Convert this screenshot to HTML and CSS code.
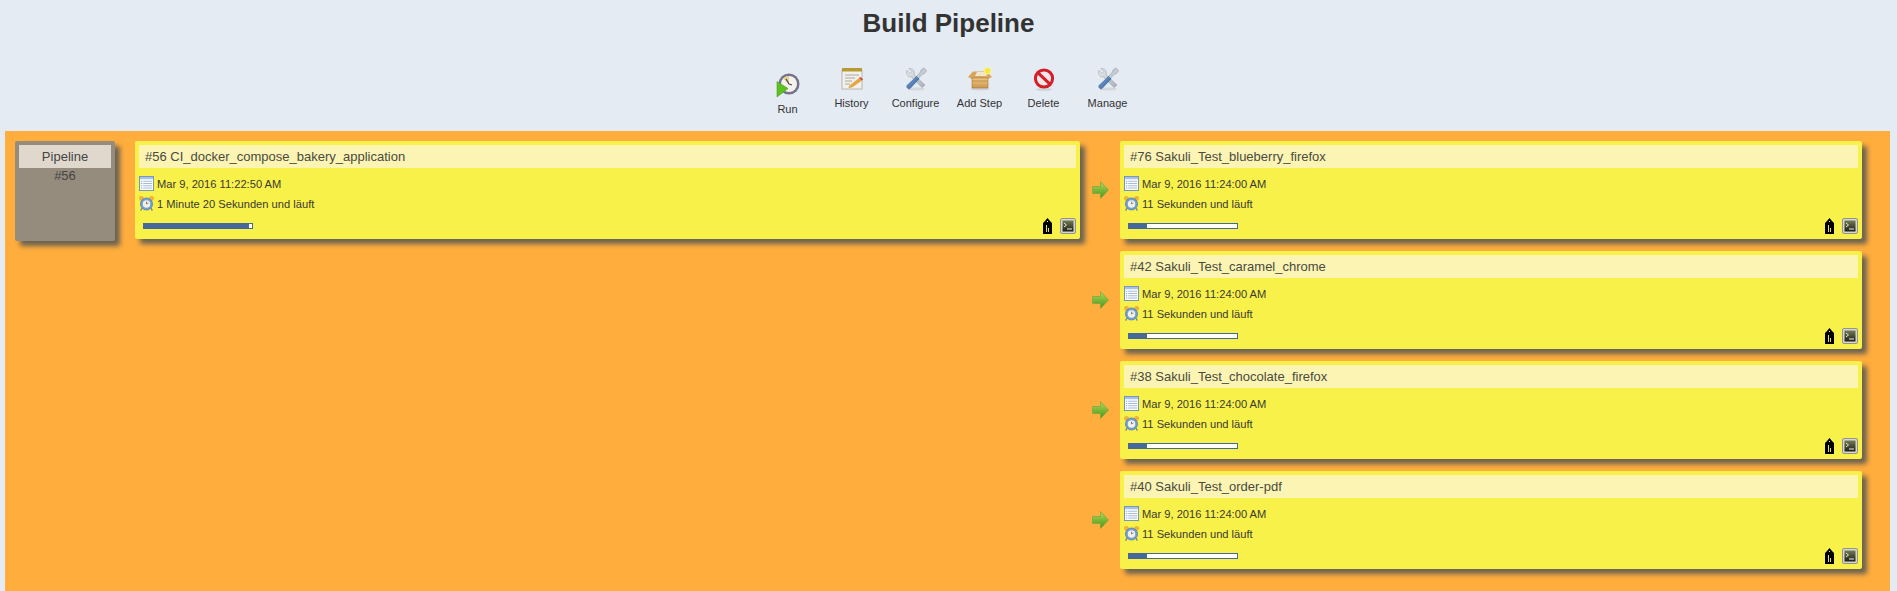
FILE: index.html
```html
<!DOCTYPE html>
<html lang="en">
<head>
    <meta charset="UTF-8">
    <title>Build Pipeline</title>
    <link rel="stylesheet" href="styles.css">
</head>
<body>
    <svg class="icon-defs" width="0" height="0">
        <defs>
            <linearGradient id="gradBlue" x1="0" y1="0" x2="1" y2="1"><stop offset="0" stop-color="#7ea6d8"/><stop offset="1" stop-color="#2f5f9e"/></linearGradient>
            <linearGradient id="gradSteel" x1="0" y1="0" x2="1" y2="1"><stop offset="0" stop-color="#eef0f2"/><stop offset="1" stop-color="#a8adb3"/></linearGradient>
            <linearGradient id="gradGreen" x1="0" y1="0" x2="0" y2="1"><stop offset="0" stop-color="#b4dc55"/><stop offset="1" stop-color="#46941a"/></linearGradient>
            <linearGradient id="gradBox" x1="0" y1="0" x2="0" y2="1"><stop offset="0" stop-color="#f0c885"/><stop offset="1" stop-color="#cb9550"/></linearGradient>
            <linearGradient id="gradTerm" x1="0" y1="0" x2="0" y2="1"><stop offset="0" stop-color="#727c52"/><stop offset="1" stop-color="#1c1f14"/></linearGradient>

            <symbol id="iconTools" viewBox="0 0 24 24">
                <ellipse cx="12" cy="22" rx="9" ry="1.6" fill="#d3d8dc"/>
                <path d="M5 1.5 L8 4.5 L6 6.5 L3 3.5 C1.6 7.4 4.5 10.5 7.5 9.8 L18 20.5 L21 18 L10 7.5 C11 4 8.5 1 5 1.5 Z" fill="url(#gradSteel)" stroke="#9aa0a6" stroke-width=".6"/>
                <path d="M20 1 L22.5 3.5 L20.5 6.5 L18.5 7 L14 12 L12 10 L16.5 5 L17 3 Z" fill="#c3ccd6" stroke="#8a9096" stroke-width=".5"/>
                <path d="M12.5 9.5 L15 12 L6 21.5 C4.5 22.5 2 20.5 3 18.5 Z" fill="url(#gradBlue)" stroke="#2b5288" stroke-width=".5"/>
            </symbol>

            <symbol id="iconCalendar" viewBox="0 0 16 16">
                <rect x=".5" y=".5" width="15" height="15" fill="#fbfcfe" stroke="#6b90c2"/>
                <rect x="1" y="1" width="14" height="2.4" fill="#a9c2e2"/>
                <path d="M4.5 5.6H14M4.5 8H14M4.5 10.4H14M4.5 12.8H14" stroke="#8aa6cc" stroke-width=".8"/>
                <path d="M2 5.6H3.4M2 8H3.4M2 10.4H3.4M2 12.8H3.4" stroke="#6b90c2" stroke-width=".8"/>
            </symbol>

            <symbol id="iconClock" viewBox="0 0 16 16">
                <circle cx="2.6" cy="2.6" r="2.6" fill="#eeb238"/>
                <circle cx="13.4" cy="2.6" r="2.6" fill="#eeb238"/>
                <path d="M3 13L1.8 15.6M13 13L14.2 15.6" stroke="#6e7f96" stroke-width="1.3"/>
                <circle cx="8" cy="8.5" r="6.4" fill="#6f9fdc" stroke="#4a78ad" stroke-width=".8"/>
                <circle cx="8" cy="8.5" r="4" fill="#f3f0e2"/>
                <path d="M8 6V8.5L10 7.4" fill="none" stroke="#666" stroke-width=".8"/>
            </symbol>

            <symbol id="iconArrow" viewBox="0 0 17 18">
                <path d="M.5 5.5H8.5V.5L16.5 9L8.5 17.5V12.5H.5Z" fill="url(#gradGreen)" stroke="#7ba444" stroke-width=".7"/>
            </symbol>

            <symbol id="iconTag" viewBox="0 0 9 16">
                <path d="M4.5 0L7 3L9 5V16H0V5L2 3Z" fill="#000"/>
                <rect x="4" y="3" width="1" height="1" fill="#f8f046"/>
                <path d="M3.5 7V14M5.5 10V14" stroke="#e8df50"/>
            </symbol>

            <symbol id="iconTerminal" viewBox="0 0 16 16">
                <rect x=".5" y=".5" width="15" height="15" rx="1.5" fill="#d6d6cc" stroke="#94948a"/>
                <rect x="2.5" y="2.5" width="11" height="11" fill="url(#gradTerm)"/>
                <path d="M4 5L6.5 7L4 9" fill="none" stroke="#e6e8da" stroke-width="1"/>
                <path d="M7 11H12" stroke="#f2f2ea" stroke-width="1"/>
            </symbol>
        </defs>
    </svg>

    <h1 class="page-title">Build Pipeline</h1>

    <div class="toolbar">
        <a class="tool tool-run">
            <svg class="tool-icon" viewBox="0 0 24 24">
                <circle cx="13" cy="11" r="10.5" fill="#77728c"/>
                <circle cx="13" cy="11" r="8" fill="#f4f3ec"/>
                <path d="M13 11L7 5.5A8 8 0 0 1 13 3Z" fill="#e6cf8f"/>
                <path d="M13 11L10 6M13 11L16 12" stroke="#444" stroke-width="1.2"/>
                <path d="M1 8.5L12 15.5L1 24Z" fill="#5cc21f" stroke="#3f8f14" stroke-width=".5"/>
            </svg>
            <span>Run</span>
        </a>
        <a class="tool">
            <svg class="tool-icon" viewBox="0 0 24 24">
                <rect x="2" y="3" width="20" height="19" fill="#f2f0ea" stroke="#b8b6ae"/>
                <rect x="2" y="1" width="20" height="3.5" fill="#b79a34"/>
                <path d="M5 8H19M5 11H15M5 14H12M5 17H10" stroke="#a8a8a2"/>
                <path d="M9 19L19 11L22 13.5L12 20.5L8.5 21Z" fill="#e3a743"/>
                <path d="M19 11L20.5 10L23 12.5L22 13.5Z" fill="#d23c30"/>
            </svg>
            <span>History</span>
        </a>
        <a class="tool">
            <svg class="tool-icon"><use href="#iconTools"/></svg>
            <span>Configure</span>
        </a>
        <a class="tool">
            <svg class="tool-icon" viewBox="0 0 24 24">
                <ellipse cx="12" cy="22" rx="10" ry="1.5" fill="#cdd2d6"/>
                <path d="M0 10L5 4.5H19L24 10L20 12H4Z" fill="#d9a55c"/>
                <path d="M7 9L9 5H17L19 9Z" fill="#efe6cf"/>
                <path d="M4 11H20V21H4Z" fill="url(#gradBox)" stroke="#a5753a" stroke-width=".6"/>
                <path d="M4 14H20" stroke="#b5853f" stroke-width=".8"/>
                <circle cx="19.5" cy="3.8" r="3.4" fill="#f6e93c" stroke="#fdf8a8" stroke-width=".8"/>
            </svg>
            <span>Add Step</span>
        </a>
        <a class="tool">
            <svg class="tool-icon" viewBox="0 0 24 24">
                <ellipse cx="12" cy="22.5" rx="8" ry="1.3" fill="#cdd2d6"/>
                <circle cx="12" cy="11.5" r="8.6" fill="#f3e7e7" stroke="#d21f2a" stroke-width="3"/>
                <path d="M6 5.8L18 17.2" stroke="#d21f2a" stroke-width="3"/>
            </svg>
            <span>Delete</span>
        </a>
        <a class="tool">
            <svg class="tool-icon"><use href="#iconTools"/></svg>
            <span>Manage</span>
        </a>
    </div>

    <main class="pipeline">
        <div class="revision">
            <div class="revision-title">Pipeline</div>
            <div class="revision-no">#56</div>
        </div>

        <div class="build build-main">
            <div class="build-title">#56 CI_docker_compose_bakery_application</div>
            <div class="build-line"><svg class="line-icon"><use href="#iconCalendar"/></svg>Mar 9, 2016 11:22:50 AM</div>
            <div class="build-line"><svg class="line-icon"><use href="#iconClock"/></svg>1 Minute 20 Sekunden und läuft</div>
            <div class="build-foot">
                <div class="progress"><div class="progress-fill" style="width: 97%"></div></div>
                <svg class="tag-icon"><use href="#iconTag"/></svg>
                <svg class="term-icon"><use href="#iconTerminal"/></svg>
            </div>
        </div>

        <div class="downstream">
            <div class="downstream-row">
                <div class="arrow-cell"><svg class="arrow-icon"><use href="#iconArrow"/></svg></div>
                <div class="build">
                    <div class="build-title">#76 Sakuli_Test_blueberry_firefox</div>
                    <div class="build-line"><svg class="line-icon"><use href="#iconCalendar"/></svg>Mar 9, 2016 11:24:00 AM</div>
                    <div class="build-line"><svg class="line-icon"><use href="#iconClock"/></svg>11 Sekunden und läuft</div>
                    <div class="build-foot">
                        <div class="progress"><div class="progress-fill" style="width: 17%"></div></div>
                        <svg class="tag-icon"><use href="#iconTag"/></svg>
                        <svg class="term-icon"><use href="#iconTerminal"/></svg>
                    </div>
                </div>
            </div>
            <div class="downstream-row">
                <div class="arrow-cell"><svg class="arrow-icon"><use href="#iconArrow"/></svg></div>
                <div class="build">
                    <div class="build-title">#42 Sakuli_Test_caramel_chrome</div>
                    <div class="build-line"><svg class="line-icon"><use href="#iconCalendar"/></svg>Mar 9, 2016 11:24:00 AM</div>
                    <div class="build-line"><svg class="line-icon"><use href="#iconClock"/></svg>11 Sekunden und läuft</div>
                    <div class="build-foot">
                        <div class="progress"><div class="progress-fill" style="width: 17%"></div></div>
                        <svg class="tag-icon"><use href="#iconTag"/></svg>
                        <svg class="term-icon"><use href="#iconTerminal"/></svg>
                    </div>
                </div>
            </div>
            <div class="downstream-row">
                <div class="arrow-cell"><svg class="arrow-icon"><use href="#iconArrow"/></svg></div>
                <div class="build">
                    <div class="build-title">#38 Sakuli_Test_chocolate_firefox</div>
                    <div class="build-line"><svg class="line-icon"><use href="#iconCalendar"/></svg>Mar 9, 2016 11:24:00 AM</div>
                    <div class="build-line"><svg class="line-icon"><use href="#iconClock"/></svg>11 Sekunden und läuft</div>
                    <div class="build-foot">
                        <div class="progress"><div class="progress-fill" style="width: 17%"></div></div>
                        <svg class="tag-icon"><use href="#iconTag"/></svg>
                        <svg class="term-icon"><use href="#iconTerminal"/></svg>
                    </div>
                </div>
            </div>
            <div class="downstream-row">
                <div class="arrow-cell"><svg class="arrow-icon"><use href="#iconArrow"/></svg></div>
                <div class="build">
                    <div class="build-title">#40 Sakuli_Test_order-pdf</div>
                    <div class="build-line"><svg class="line-icon"><use href="#iconCalendar"/></svg>Mar 9, 2016 11:24:00 AM</div>
                    <div class="build-line"><svg class="line-icon"><use href="#iconClock"/></svg>11 Sekunden und läuft</div>
                    <div class="build-foot">
                        <div class="progress"><div class="progress-fill" style="width: 17%"></div></div>
                        <svg class="tag-icon"><use href="#iconTag"/></svg>
                        <svg class="term-icon"><use href="#iconTerminal"/></svg>
                    </div>
                </div>
            </div>
        </div>
    </main>
</body>
</html>
```

FILE: styles.css
```css
html, body { height: 100%; overflow: hidden; }
body { margin: 0; background: #e4ebf3; color: #333; font-family: "Liberation Sans", Arial, sans-serif; font-size: 11px; }
.icon-defs { position: absolute; }

.page-title { margin: 0; padding-top: 8px; height: 60px; box-sizing: border-box; font-size: 26px; line-height: 30px; font-weight: bold; text-align: center; color: #333; }

.toolbar { display: flex; justify-content: center; align-items: flex-start; height: 71px; box-sizing: border-box; padding: 7px 2px 0 0; }
.tool { display: flex; flex-direction: column; align-items: center; width: 64px; color: #333; }
.tool-icon { width: 24px; height: 24px; margin-bottom: 5px; }
.tool span { line-height: 14px; }
.tool-run { padding-top: 6px; }

.pipeline { display: flex; align-items: flex-start; gap: 20px; margin: 0 7px 0 5px; padding: 10px 10px 22px; background: #ffad3d; }

.revision { width: 100px; height: 100px; padding: 4px; box-sizing: border-box; flex: none; background: #958c7e; border-radius: 2px; box-shadow: 5px 5px 5px #6b6250; text-align: center; font-size: 13px; color: #444; }
.revision-title { height: 23px; line-height: 24px; background: #e0d8cd; }
.revision-no { line-height: 15px; }

.build { display: flex; flex-direction: column; height: 98px; padding: 4px; box-sizing: border-box; background: #f8f14a; border-radius: 2px; box-shadow: 5px 5px 5px #6b6250; color: #3a3a30; }
.build-main { width: 945px; flex: none; }
.build-title { height: 23px; line-height: 24px; padding-left: 6px; margin-bottom: 8px; background: #fbf4b3; font-size: 13px; color: #4a4a40; }
.build-line { display: flex; align-items: center; height: 15px; margin-bottom: 5px; padding-top: 1px; box-sizing: border-box; font-size: 11.15px; white-space: nowrap; }
.line-icon { width: 15px; height: 15px; margin: -1px 3px 0 0; flex: none; }

.build-foot { display: flex; align-items: center; height: 16px; margin-top: 2px; padding-left: 4px; }
.progress { width: 110px; height: 6px; box-sizing: border-box; border: 1px solid #44699a; background: #fff; margin-right: auto; }
.progress-fill { height: 100%; background: #44699a; }
.tag-icon { width: 9px; height: 16px; margin-right: 8px; }
.term-icon { width: 16px; height: 16px; }

.downstream { display: flex; flex-direction: column; gap: 12px; }
.downstream-row { display: flex; align-items: center; margin-left: -20px; }
.downstream-row .build { width: 742px; }
.arrow-cell { width: 40px; padding-left: 12px; box-sizing: border-box; display: flex; }
.arrow-icon { width: 17px; height: 18px; }
```
